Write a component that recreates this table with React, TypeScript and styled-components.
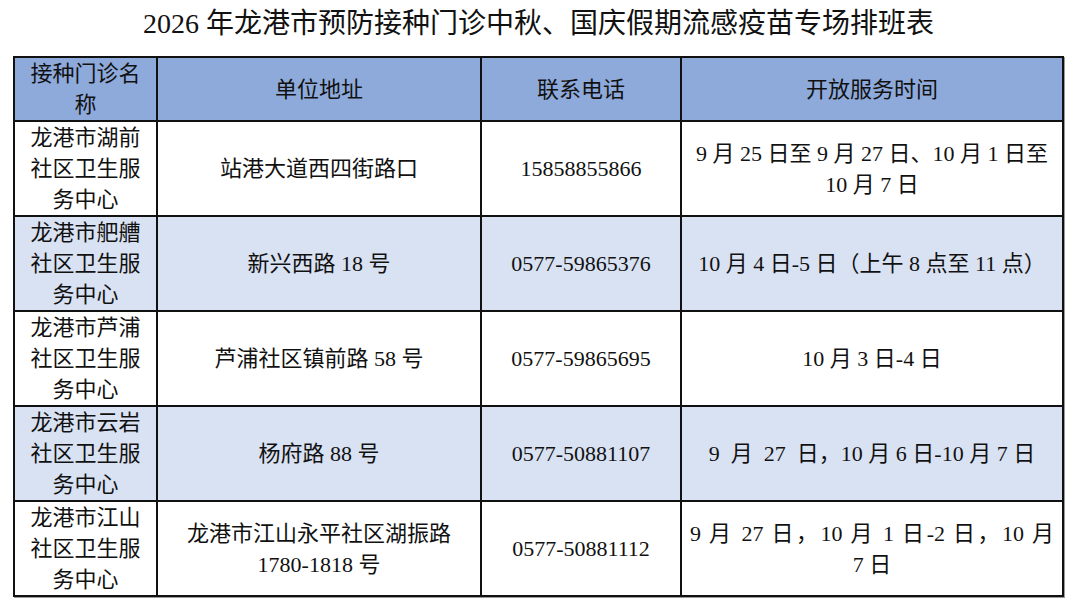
import React from "react";
import styled, { createGlobalStyle } from "styled-components";

const GlobalStyle = createGlobalStyle`
  html, body {
    margin: 0;
    padding: 0;
    background: #ffffff;
  }
  body {
    font-family: "Liberation Serif", "Noto Sans CJK SC", serif;
    color: #111111;
  }
`;

const Page = styled.div`
  width: 1080px;
  height: 612px;
  padding: 6px 0 0 13px;
  box-sizing: border-box;
`;

const Title = styled.h1`
  margin: 0 0 14px;
  width: 1051px;
  text-align: center;
  font-size: 28px;
  line-height: 36px;
  font-weight: 400;
  color: #111111;
`;

const Table = styled.div`
  width: 1051px;
  box-sizing: border-box;
  border: 2px solid #111111;
  box-shadow: 1px 1px 0 #9a9a9a;
`;

const tones = {
  head: "#8eaadb",
  alt: "#d9e2f3",
  plain: "#ffffff",
};

const Row = styled.div<{ $tone: keyof typeof tones }>`
  display: grid;
  grid-template-columns: 141px 324px 200px 382px;
  background: ${(p) => tones[p.$tone]};
  & + & {
    border-top: 2px solid #111111;
  }
`;

const Cell = styled.div<{ $first?: boolean; $wide?: boolean }>`
  display: flex;
  flex-direction: column;
  justify-content: center;
  align-items: stretch;
  box-sizing: border-box;
  min-height: 62px;
  padding: 0 ${(p) => (p.$first ? "12px" : p.$wide ? "8px" : "6px")};
  border-left: ${(p) => (p.$first ? "none" : "2px solid #111111")};
  text-align: center;
  font-size: 22px;
  line-height: 31px;
`;

const Line = styled.span<{ $spread?: boolean }>`
  display: block;
  white-space: nowrap;
  text-align: ${(p) => (p.$spread ? "justify" : "center")};
  text-align-last: ${(p) => (p.$spread ? "justify" : "center")};
`;

type Clinic = {
  name: string;
  address: React.ReactNode;
  phone: string;
  hours: React.ReactNode;
};

const clinics: Clinic[] = [
  {
    name: "龙港市湖前社区卫生服务中心",
    address: "站港大道西四街路口",
    phone: "15858855866",
    hours: (
      <>
        <Line>9 月 25 日至 9 月 27 日、10 月 1 日至</Line>
        <Line>10 月 7 日</Line>
      </>
    ),
  },
  {
    name: "龙港市舥艚社区卫生服务中心",
    address: "新兴西路 18 号",
    phone: "0577-59865376",
    hours: "10 月 4 日-5 日（上午 8 点至 11 点）",
  },
  {
    name: "龙港市芦浦社区卫生服务中心",
    address: "芦浦社区镇前路 58 号",
    phone: "0577-59865695",
    hours: "10 月 3 日-4 日",
  },
  {
    name: "龙港市云岩社区卫生服务中心",
    address: "杨府路 88 号",
    phone: "0577-50881107",
    hours: "9\u00a0\u00a0月\u00a0\u00a027\u00a0\u00a0日，10 月 6 日-10 月 7 日",
  },
  {
    name: "龙港市江山社区卫生服务中心",
    address: (
      <>
        <Line>龙港市江山永平社区湖振路</Line>
        <Line>1780-1818 号</Line>
      </>
    ),
    phone: "0577-50881112",
    hours: (
      <>
        <Line $spread>9 月 27 日，10 月 1 日-2 日，10 月</Line>
        <Line>7 日</Line>
      </>
    ),
  },
];

export default function App() {
  return (
    <Page>
      <GlobalStyle />
      <Title>2026 年龙港市预防接种门诊中秋、国庆假期流感疫苗专场排班表</Title>
      <Table>
        <Row $tone="head">
          <Cell $first>接种门诊名称</Cell>
          <Cell>单位地址</Cell>
          <Cell>联系电话</Cell>
          <Cell>开放服务时间</Cell>
        </Row>
        {clinics.map((c, i) => (
          <Row key={c.phone} $tone={i % 2 === 1 ? "alt" : "plain"}>
            <Cell $first>{c.name}</Cell>
            <Cell>{c.address}</Cell>
            <Cell>{c.phone}</Cell>
            <Cell $wide>{c.hours}</Cell>
          </Row>
        ))}
      </Table>
    </Page>
  );
}
